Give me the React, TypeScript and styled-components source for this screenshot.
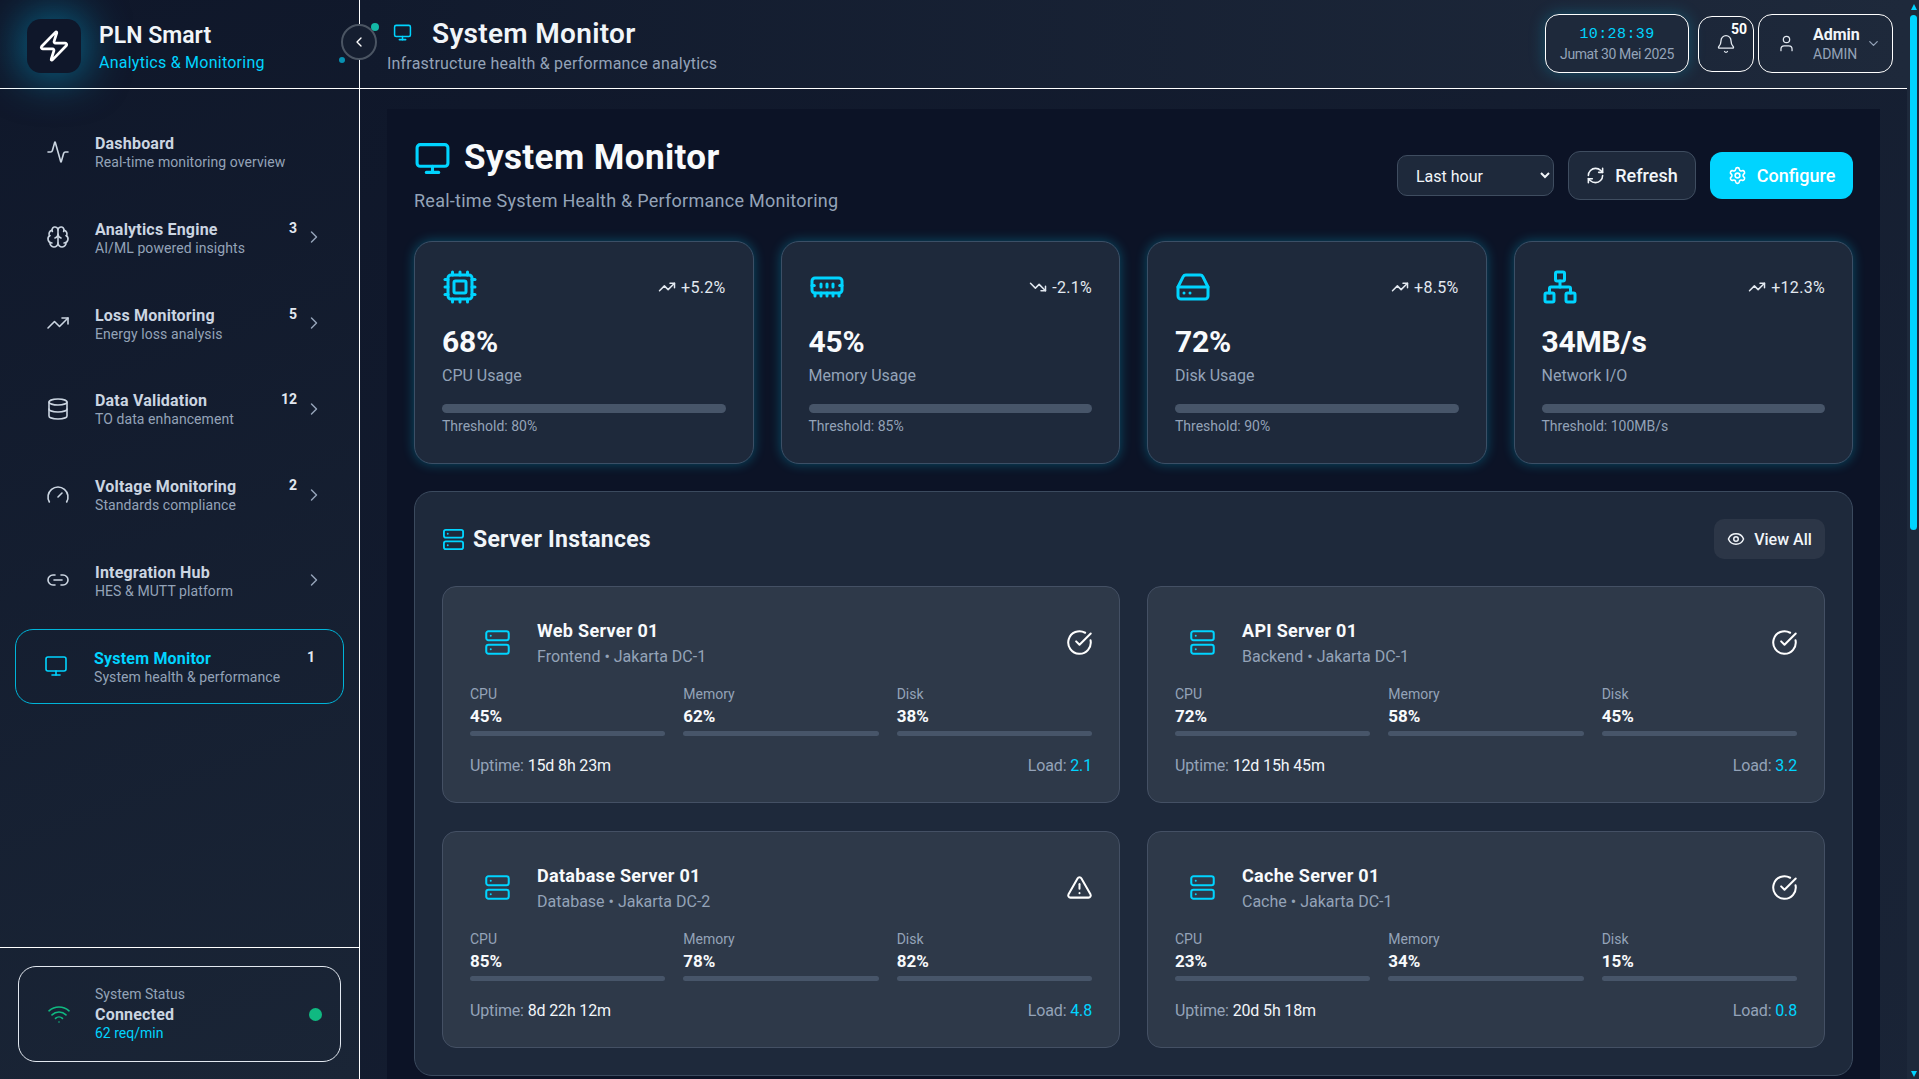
import React from 'react'
import styled, { createGlobalStyle } from 'styled-components'
import {
	Activity, Bell, Brain, ChevronDown, ChevronLeft, ChevronRight, CircleCheckBig, Cpu, Database, Eye, Gauge,
	HardDrive, Link2, MemoryStick, Monitor, Network, RefreshCw, Server, Settings, TrendingDown, TrendingUp,
	TriangleAlert, User, Wifi, Zap,
} from 'lucide-react'

const cyan = '#00d4ff'

const GlobalStyle = createGlobalStyle`
	* { box-sizing: border-box; }
	html, body { margin: 0; height: 100%; overflow: hidden; background: #1e293b; }
	body { font-family: Roboto, "Noto Sans", sans-serif; color: #fff; }
`

const Shell = styled.div`
	display: flex;
	height: 100vh;
`

const Sidebar = styled.aside`
	position: relative;
	z-index: 2;
	width: 360px;
	flex: none;
	display: flex;
	flex-direction: column;
	border-right: 1px solid #fff;
	background: linear-gradient(160deg, #0f172a, #1a2536);
`

const Brand = styled.div`
	position: relative;
	height: 89px;
	flex: none;
	display: flex;
	align-items: center;
	gap: 18px;
	padding: 3px 0 0 27px;
	border-bottom: 1px solid #fff;
`

const LogoBox = styled.div`
	width: 54px;
	height: 54px;
	border-radius: 14px;
	background: #0f172a;
	display: flex;
	align-items: center;
	justify-content: center;
	box-shadow: 0 0 42px 6px rgba(0, 170, 220, 0.5);
`

const BrandText = styled.div`
	padding-top: 3px;
`

const BrandName = styled.div`
	font-size: 23px;
	line-height: 30px;
	font-weight: 600;
	color: #f1f5f9;
`

const BrandSub = styled.div`
	font-size: 16px;
	line-height: 22px;
	color: ${cyan};
	margin-top: 1px;
	letter-spacing: 0.25px;
`

const CollapseButton = styled.button`
	position: absolute;
	left: 341px;
	top: 24px;
	width: 36px;
	height: 36px;
	padding: 0;
	border-radius: 50%;
	border: 2px solid #4b5563;
	background: #151e30;
	color: #fff;
	display: flex;
	align-items: center;
	justify-content: center;
`

const Dot = styled.span<{ $x: number; $y: number; $size: number; $color: string }>`
	position: absolute;
	left: ${({ $x }) => $x}px;
	top: ${({ $y }) => $y}px;
	width: ${({ $size }) => $size}px;
	height: ${({ $size }) => $size}px;
	border-radius: 50%;
	background: ${({ $color }) => $color};
`

const Nav = styled.nav`
	flex: 1;
	display: flex;
	flex-direction: column;
	gap: 10.8px;
	padding: 25px 15px 0;
`

const NavItem = styled.div<{ $active?: boolean }>`
	height: 75px;
	flex: none;
	display: flex;
	align-items: center;
	padding: 0 ${({ $active }) => ($active ? 28 : 19)}px 0 ${({ $active }) => ($active ? 28 : 30)}px;
	border: 1px solid ${({ $active }) => ($active ? '#00b4d8' : 'transparent')};
	border-radius: 18px;
	color: #cbd5e1;
	svg.lead { flex: none; color: ${({ $active }) => ($active ? cyan : '#cbd5e1')}; }
`

const NavText = styled.div<{ $active?: boolean }>`
	flex: 1;
	min-width: 0;
	padding-top: 2px;
	margin-left: ${({ $active }) => ($active ? 26 : 25)}px;
`

const NavTitle = styled.div<{ $active?: boolean }>`
	font-size: 16px;
	line-height: 19px;
	font-weight: 700;
	letter-spacing: 0.2px;
	color: ${({ $active }) => ($active ? cyan : '#cbd5e1')};
`

const NavSub = styled.div`
	font-size: 14px;
	line-height: 18px;
	letter-spacing: 0.08px;
	color: #94a3b8;
`

const NavBadge = styled.span`
	align-self: flex-start;
	margin-top: 18px;
	font-size: 14px;
	line-height: 18px;
	font-weight: 700;
	color: #e2e8f0;
`

const NavChevron = styled(ChevronRight)`
	flex: none;
	margin-left: 7px;
	color: #94a3b8;
`

const StatusWrap = styled.div`
	flex: none;
	border-top: 1px solid #fff;
	padding: 18px 18px 17px;
`

const StatusCard = styled.div`
	height: 96px;
	display: flex;
	align-items: center;
	padding: 0 18px 0 28px;
	border: 1px solid #e2e8f0;
	border-radius: 18px;
	color: #10b981;
`

const StatusText = styled.div`
	flex: 1;
	margin-left: 24px;
	padding-bottom: 2px;
`

const StatusLabel = styled.div`
	font-size: 14px;
	line-height: 20px;
	color: #94a3b8;
`

const StatusValue = styled.div`
	font-size: 16px;
	line-height: 21px;
	font-weight: 700;
	letter-spacing: 0.2px;
	color: #cbd5e1;
`

const StatusRate = styled.div`
	font-size: 14px;
	line-height: 17px;
	color: ${cyan};
`

const StatusDot = styled.span`
	width: 13px;
	height: 13px;
	border-radius: 50%;
	background: #10b981;
`

const Scroller = styled.div`
	flex: 1;
	min-width: 0;
	height: 100vh;
	overflow: hidden;
`

const Column = styled.div`
	min-height: 2190px;
	background: linear-gradient(135deg, #0f172a, #1e293b);
`

const ScrollRail = styled.div`
	width: 12px;
	flex: none;
	display: flex;
	flex-direction: column;
	align-items: center;
	padding: 4px 2px 2px 3px;
	background: #1e293b;
`

const ScrollArrow = styled.span<{ $down?: boolean }>`
	width: 0;
	height: 0;
	flex: none;
	border-left: 3.5px solid transparent;
	border-right: 3.5px solid transparent;
	${({ $down }) => ($down ? `border-top: 6px solid ${cyan}; margin-top: auto;` : `border-bottom: 6px solid ${cyan};`)}
`

const ScrollThumb = styled.span`
	width: 7px;
	height: 515px;
	flex: none;
	margin-top: 5px;
	border-radius: 4px;
	background: ${cyan};
`

const TopBar = styled.header`
	height: 89px;
	display: flex;
	align-items: center;
	justify-content: space-between;
	padding: 0 14px 1px 27px;
	border-bottom: 1px solid #fff;
	background: linear-gradient(90deg, #111a2d, #1e293b);
`

const TopHeading = styled.div`
	padding-top: 4px;
`

const TopTitleRow = styled.div`
	display: flex;
	align-items: center;
	gap: 20px;
	margin-left: 6px;
	svg { color: ${cyan}; position: relative; top: -2px; }
`

const TopTitle = styled.h1`
	margin: 0;
	font-size: 28px;
	line-height: 36px;
	font-weight: 600;
	letter-spacing: 0.3px;
	color: #f1f5f9;
`

const TopSub = styled.div`
	font-size: 16px;
	line-height: 22px;
	letter-spacing: 0.2px;
	color: #94a3b8;
	margin-top: 1px;
`

const TopActions = styled.div`
	display: flex;
	align-items: center;
`

const Clock = styled.div`
	width: 144px;
	height: 59px;
	border: 1px solid #fff;
	border-radius: 14px;
	background: #1e293b;
	box-shadow: 0 0 16px rgba(0, 212, 255, 0.25);
	text-align: center;
	padding-top: 10px;
`

const ClockTime = styled.div`
	font-family: "Liberation Mono", monospace;
	font-size: 15px;
	line-height: 19px;
	letter-spacing: 0.4px;
	color: ${cyan};
`

const ClockDate = styled.div`
	font-size: 14px;
	line-height: 20px;
	letter-spacing: -0.4px;
	color: #94a3b8;
`

const BellBox = styled.div`
	position: relative;
	width: 56px;
	height: 56px;
	margin-left: 9px;
	border: 1px solid #fff;
	border-radius: 14px;
	display: flex;
	align-items: center;
	justify-content: center;
	color: #e2e8f0;
`

const BellCount = styled.span`
	position: absolute;
	top: 3px;
	right: 6px;
	font-size: 14px;
	line-height: 18px;
	font-weight: 700;
	color: #fff;
`

const UserBox = styled.div`
	width: 135px;
	height: 59px;
	margin-left: 4px;
	border: 1px solid #fff;
	border-radius: 14px;
	display: flex;
	align-items: center;
	padding: 0 11px 0 18px;
	color: #e2e8f0;
`

const UserText = styled.div`
	flex: 1;
	margin-left: 17px;
`

const UserName = styled.div`
	font-size: 16px;
	line-height: 20px;
	font-weight: 700;
	color: #f1f5f9;
`

const UserRole = styled.div`
	font-size: 14px;
	line-height: 18px;
	color: #94a3b8;
`

const Main = styled.main`
	padding: 20px 27px 27px;
`

const Panel = styled.div`
	background: #0c1326;
	padding: 28px 27px;
`

const PanelHead = styled.div`
	display: flex;
	align-items: center;
	justify-content: space-between;
	height: 76px;
`

const PanelTitleRow = styled.div`
	display: flex;
	align-items: center;
	gap: 13px;
	svg { color: ${cyan}; }
`

const PanelTitle = styled.h2`
	margin: 0;
	font-size: 35px;
	line-height: 42px;
	font-weight: 700;
	letter-spacing: 0.4px;
	color: #f8fafc;
`

const PanelSub = styled.div`
	font-size: 18px;
	line-height: 24px;
	letter-spacing: 0.26px;
	margin-top: 10px;
	color: #94a3b8;
`

const Controls = styled.div`
	display: flex;
	align-items: center;
	gap: 14px;
`

const RangeSelect = styled.select`
	width: 157px;
	height: 41px;
	padding: 2px 0 0 14px;
	border: 1px solid #3f4d60;
	border-radius: 10px;
	background: #1e293b;
	color: #f1f5f9;
	color-scheme: dark;
	font: 16px Roboto, sans-serif;
`

const GhostButton = styled.button`
	height: 49px;
	width: 128px;
	display: flex;
	align-items: center;
	justify-content: center;
	gap: 10px;
	border: 1px solid #3f4d60;
	border-radius: 12px;
	background: #1e293b;
	color: #f1f5f9;
	font: 500 18px Roboto, sans-serif;
`

const PrimaryButton = styled.button`
	height: 47px;
	width: 143px;
	display: flex;
	align-items: center;
	justify-content: center;
	gap: 10px;
	border: 0;
	border-radius: 12px;
	background: ${cyan};
	color: #fff;
	font: 500 18px Roboto, sans-serif;
`

const StatGrid = styled.div`
	display: grid;
	grid-template-columns: repeat(4, 1fr);
	gap: 27px;
	margin-top: 28px;
`

const StatCard = styled.div`
	height: 223px;
	padding: 27px;
	border: 1px solid #3b4f66;
	border-radius: 18px;
	background: #1e293b;
	box-shadow: 0 0 12px rgba(0, 212, 255, 0.3);
`

const StatTop = styled.div`
	height: 36px;
	display: flex;
	align-items: center;
	justify-content: space-between;
	color: ${cyan};
`

const Trend = styled.div`
	display: flex;
	align-items: center;
	gap: 5px;
	font-size: 16px;
	letter-spacing: 0.3px;
	color: #e2e8f0;
`

const StatValue = styled.div`
	font-size: 30px;
	line-height: 34px;
	font-weight: 700;
	letter-spacing: -0.2px;
	margin-top: 20px;
	color: #f8fafc;
`

const StatLabel = styled.div`
	font-size: 16px;
	line-height: 22px;
	margin-top: 6px;
	color: #94a3b8;
`

const Track = styled.div<{ $height: number }>`
	height: ${({ $height }) => $height}px;
	border-radius: ${({ $height }) => $height / 2}px;
	background: #475569;
`

const StatBar = styled(Track)`
	margin-top: 17px;
`

const Threshold = styled.div`
	font-size: 14px;
	line-height: 18px;
	margin-top: 4px;
	color: #94a3b8;
`

const Section = styled.section`
	margin-top: 27px;
	padding: 27px;
	border: 1px solid #3b4a5e;
	border-radius: 18px;
	background: #1e293b;
`

const SectionHead = styled.div`
	height: 40px;
	display: flex;
	align-items: center;
	justify-content: space-between;
`

const SectionTitle = styled.h3`
	margin: 0;
	display: flex;
	align-items: center;
	gap: 8px;
	font-size: 23px;
	letter-spacing: 0.25px;
	font-weight: 700;
	color: #f1f5f9;
	svg { color: ${cyan}; }
`

const ViewAll = styled.button`
	width: 111px;
	height: 40px;
	display: flex;
	align-items: center;
	justify-content: center;
	gap: 9px;
	border: 0;
	border-radius: 10px;
	background: #2c3647;
	color: #f1f5f9;
	font: 500 16px Roboto, sans-serif;
`

const ServerGrid = styled.div`
	display: grid;
	grid-template-columns: 1fr 1fr;
	gap: 28px 27px;
	margin-top: 27px;
`

const ServerCard = styled.div`
	height: 217px;
	padding: 27px;
	border: 1px solid #445064;
	border-radius: 14px;
	background: #2e3949;
`

const ServerTop = styled.div`
	height: 56px;
	display: flex;
	align-items: center;
	> svg { margin-right: -1px; }
`

const ServerIcon = styled.div`
	width: 55px;
	flex: none;
	display: flex;
	justify-content: center;
	color: ${cyan};
`

const ServerText = styled.div`
	flex: 1;
	margin-left: 12px;
	padding-top: 2px;
`

const ServerName = styled.div`
	font-size: 18px;
	line-height: 24px;
	font-weight: 700;
	letter-spacing: 0.3px;
	color: #f8fafc;
`

const ServerSub = styled.div`
	font-size: 16px;
	line-height: 22px;
	margin-top: 3px;
	color: #94a3b8;
`

const MetricGrid = styled.div`
	display: grid;
	grid-template-columns: repeat(3, 1fr);
	gap: 18px;
	margin-top: 15px;
`

const MetricLabel = styled.div`
	font-size: 14px;
	line-height: 18px;
	color: #94a3b8;
`

const MetricValue = styled.div`
	font-size: 17px;
	line-height: 22px;
	margin-top: 2px;
	font-weight: 700;
	color: #f8fafc;
`

const MetricBar = styled(Track)`
	margin-top: 4px;
`

const ServerFoot = styled.div`
	display: flex;
	justify-content: space-between;
	margin-top: 19px;
	font-size: 16px;
	line-height: 22px;
	letter-spacing: -0.15px;
	color: #94a3b8;
	b { font-weight: 400; color: #f1f5f9; }
	i { font-style: normal; color: ${cyan}; }
`

const navItems = [
	{ icon: Activity, title: 'Dashboard', sub: 'Real-time monitoring overview' },
	{ icon: Brain, title: 'Analytics Engine', sub: 'AI/ML powered insights', badge: 3, more: true },
	{ icon: TrendingUp, title: 'Loss Monitoring', sub: 'Energy loss analysis', badge: 5, more: true },
	{ icon: Database, title: 'Data Validation', sub: 'TO data enhancement', badge: 12, more: true },
	{ icon: Gauge, title: 'Voltage Monitoring', sub: 'Standards compliance', badge: 2, more: true },
	{ icon: Link2, title: 'Integration Hub', sub: 'HES & MUTT platform', more: true },
	{ icon: Monitor, title: 'System Monitor', sub: 'System health & performance', badge: 1, active: true },
]

const stats = [
	{ icon: Cpu, trend: '+5.2%', down: false, value: '68%', label: 'CPU Usage', limit: '80%' },
	{ icon: MemoryStick, trend: '-2.1%', down: true, value: '45%', label: 'Memory Usage', limit: '85%' },
	{ icon: HardDrive, trend: '+8.5%', down: false, value: '72%', label: 'Disk Usage', limit: '90%' },
	{ icon: Network, trend: '+12.3%', down: false, value: '34MB/s', label: 'Network I/O', limit: '100MB/s' },
]

const servers = [
	{ name: 'Web Server 01', sub: 'Frontend • Jakarta DC-1', cpu: 45, memory: 62, disk: 38, uptime: '15d 8h 23m', load: '2.1' },
	{ name: 'API Server 01', sub: 'Backend • Jakarta DC-1', cpu: 72, memory: 58, disk: 45, uptime: '12d 15h 45m', load: '3.2' },
	{ name: 'Database Server 01', sub: 'Database • Jakarta DC-2', cpu: 85, memory: 78, disk: 82, uptime: '8d 22h 12m', load: '4.8', warn: true },
	{ name: 'Cache Server 01', sub: 'Cache • Jakarta DC-1', cpu: 23, memory: 34, disk: 15, uptime: '20d 5h 18m', load: '0.8' },
]

const App = () => {
	return (
		<Shell>
			<GlobalStyle />
			<Sidebar>
				<Brand>
					<LogoBox><Zap size={34} color="#fff" strokeWidth={1.9} /></LogoBox>
					<BrandText>
						<BrandName>PLN Smart</BrandName>
						<BrandSub>Analytics &amp; Monitoring</BrandSub>
					</BrandText>
					<Dot $x={371} $y={23} $size={8} $color="#14b8a6" />
					<Dot $x={339} $y={57} $size={6} $color="#0891b2" />
					<CollapseButton><ChevronLeft size={16} /></CollapseButton>
				</Brand>
				<Nav>
					{navItems.map(item => (
						<NavItem key={item.title} $active={item.active}>
							<item.icon className="lead" size={24} strokeWidth={1.6} />
							<NavText $active={item.active}>
								<NavTitle $active={item.active}>{item.title}</NavTitle>
								<NavSub>{item.sub}</NavSub>
							</NavText>
							{item.badge && <NavBadge>{item.badge}</NavBadge>}
							{item.more && <NavChevron size={20} strokeWidth={1.75} />}
						</NavItem>
					))}
				</Nav>
				<StatusWrap>
					<StatusCard>
						<Wifi size={24} strokeWidth={1.6} />
						<StatusText>
							<StatusLabel>System Status</StatusLabel>
							<StatusValue>Connected</StatusValue>
							<StatusRate>62 req/min</StatusRate>
						</StatusText>
						<StatusDot />
					</StatusCard>
				</StatusWrap>
			</Sidebar>
			<Scroller>
				<Column>
					<TopBar>
						<TopHeading>
							<TopTitleRow>
								<Monitor size={19} strokeWidth={1.9} />
								<TopTitle>System Monitor</TopTitle>
							</TopTitleRow>
							<TopSub>Infrastructure health &amp; performance analytics</TopSub>
						</TopHeading>
						<TopActions>
							<Clock>
								<ClockTime>10:28:39</ClockTime>
								<ClockDate>Jumat 30 Mei 2025</ClockDate>
							</Clock>
							<BellBox>
								<Bell size={20} strokeWidth={1.6} />
								<BellCount>50</BellCount>
							</BellBox>
							<UserBox>
								<User size={19} strokeWidth={1.6} />
								<UserText>
									<UserName>Admin</UserName>
									<UserRole>ADMIN</UserRole>
								</UserText>
								<ChevronDown size={15} color="#94a3b8" />
							</UserBox>
						</TopActions>
					</TopBar>
					<Main>
						<Panel>
							<PanelHead>
								<div>
									<PanelTitleRow>
										<Monitor size={37} strokeWidth={2} />
										<PanelTitle>System Monitor</PanelTitle>
									</PanelTitleRow>
									<PanelSub>Real-time System Health &amp; Performance Monitoring</PanelSub>
								</div>
								<Controls>
									<RangeSelect defaultValue="1h">
										<option value="1h">Last hour</option>
									</RangeSelect>
									<GhostButton><RefreshCw size={19} />Refresh</GhostButton>
									<PrimaryButton><Settings size={19} />Configure</PrimaryButton>
								</Controls>
							</PanelHead>
							<StatGrid>
								{stats.map(stat => (
									<StatCard key={stat.label}>
										<StatTop>
											<stat.icon size={36} strokeWidth={2} />
											<Trend>
												{stat.down ? <TrendingDown size={18} /> : <TrendingUp size={18} />}
												{stat.trend}
											</Trend>
										</StatTop>
										<StatValue>{stat.value}</StatValue>
										<StatLabel>{stat.label}</StatLabel>
										<StatBar $height={9} />
										<Threshold>Threshold: {stat.limit}</Threshold>
									</StatCard>
								))}
							</StatGrid>
							<Section>
								<SectionHead>
									<SectionTitle><Server size={23} strokeWidth={1.9} />Server Instances</SectionTitle>
									<ViewAll><Eye size={18} />View All</ViewAll>
								</SectionHead>
								<ServerGrid>
									{servers.map(server => (
										<ServerCard key={server.name}>
											<ServerTop>
												<ServerIcon><Server size={27} strokeWidth={1.8} /></ServerIcon>
												<ServerText>
													<ServerName>{server.name}</ServerName>
													<ServerSub>{server.sub}</ServerSub>
												</ServerText>
												{server.warn ? <TriangleAlert size={27} strokeWidth={1.8} /> : <CircleCheckBig size={27} strokeWidth={1.8} />}
											</ServerTop>
											<MetricGrid>
												<div>
													<MetricLabel>CPU</MetricLabel>
													<MetricValue>{server.cpu}%</MetricValue>
													<MetricBar $height={5} />
												</div>
												<div>
													<MetricLabel>Memory</MetricLabel>
													<MetricValue>{server.memory}%</MetricValue>
													<MetricBar $height={5} />
												</div>
												<div>
													<MetricLabel>Disk</MetricLabel>
													<MetricValue>{server.disk}%</MetricValue>
													<MetricBar $height={5} />
												</div>
											</MetricGrid>
											<ServerFoot>
												<span>Uptime: <b>{server.uptime}</b></span>
												<span>Load: <i>{server.load}</i></span>
											</ServerFoot>
										</ServerCard>
									))}
								</ServerGrid>
							</Section>
						</Panel>
					</Main>
				</Column>
			</Scroller>
			<ScrollRail>
				<ScrollArrow />
				<ScrollThumb />
				<ScrollArrow $down />
			</ScrollRail>
		</Shell>
	)
}

export default App
